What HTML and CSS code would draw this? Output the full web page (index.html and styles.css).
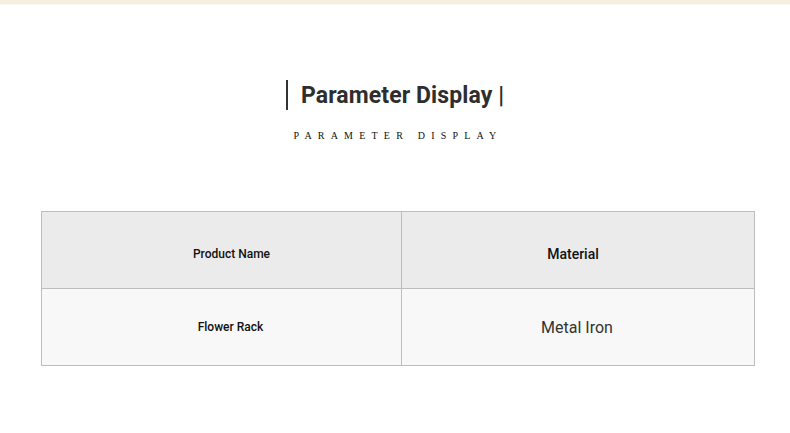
FILE: index.html
```html
<!DOCTYPE html>
<html>
<head>
<meta charset="utf-8">
<link rel="stylesheet" href="styles.css">
</head>
<body>
<div class="topbar"></div>
<div class="heading">
  <div class="title"><span class="bar"></span><span class="title-text">Parameter Display |</span></div>
  <div class="subtitle">PARAMETER DISPLAY</div>
</div>
<div class="table">
  <div class="cell head c1"><span class="sm">Product Name</span></div>
  <div class="cell head c2"><span class="md">Material</span></div>
  <div class="cell body c1"><span class="sm">Flower Rack</span></div>
  <div class="cell body c2"><span class="lg">Metal Iron</span></div>
</div>
</body>
</html>
```
FILE: styles.css
```css
html, body { margin: 0; padding: 0; background: #fff; }
body { width: 790px; height: 433px; overflow: hidden; font-family: Roboto, "Liberation Sans", sans-serif; }
.topbar { height: 4px; background: #f4efe1; border-bottom: 1px solid #fbf9f0; }
.heading { display: flex; flex-direction: column; align-items: center; padding-top: 75px; }
.title { display: flex; align-items: center; height: 30px; }
.bar { width: 2px; height: 30px; background: #333; margin-right: 13px; }
.title-text { font-size: 23px; font-weight: 700; color: #2e2e2e; letter-spacing: 0.1px; }
.subtitle { margin-top: 20px; font-family: "Liberation Serif", serif; font-size: 10px; letter-spacing: 6.2px; color: #111; margin-left: 6px; }
.table { margin: 70px 0 0 41px; display: grid; grid-template-columns: 360px 353px; grid-template-rows: 77px 77px; border-top: 1px solid #bdbdbd; border-left: 1px solid #bdbdbd; box-sizing: border-box; width: 714px; }
.cell { display: flex; align-items: center; justify-content: center; border-right: 1px solid #bdbdbd; border-bottom: 1px solid #bdbdbd; }
.head { background: #ebebeb; }
.body { background: #f8f8f8; }
.sm { font-size: 12px; font-weight: 500; color: #111; }
.md { font-size: 14px; font-weight: 500; color: #111; margin-right: 10px; }
.lg { font-size: 16px; color: #333; margin-right: 2px; }
.head span { margin-top: 8px; }
.head .sm { margin-left: 20px; }
.body .sm { margin-left: 18px; }
```
